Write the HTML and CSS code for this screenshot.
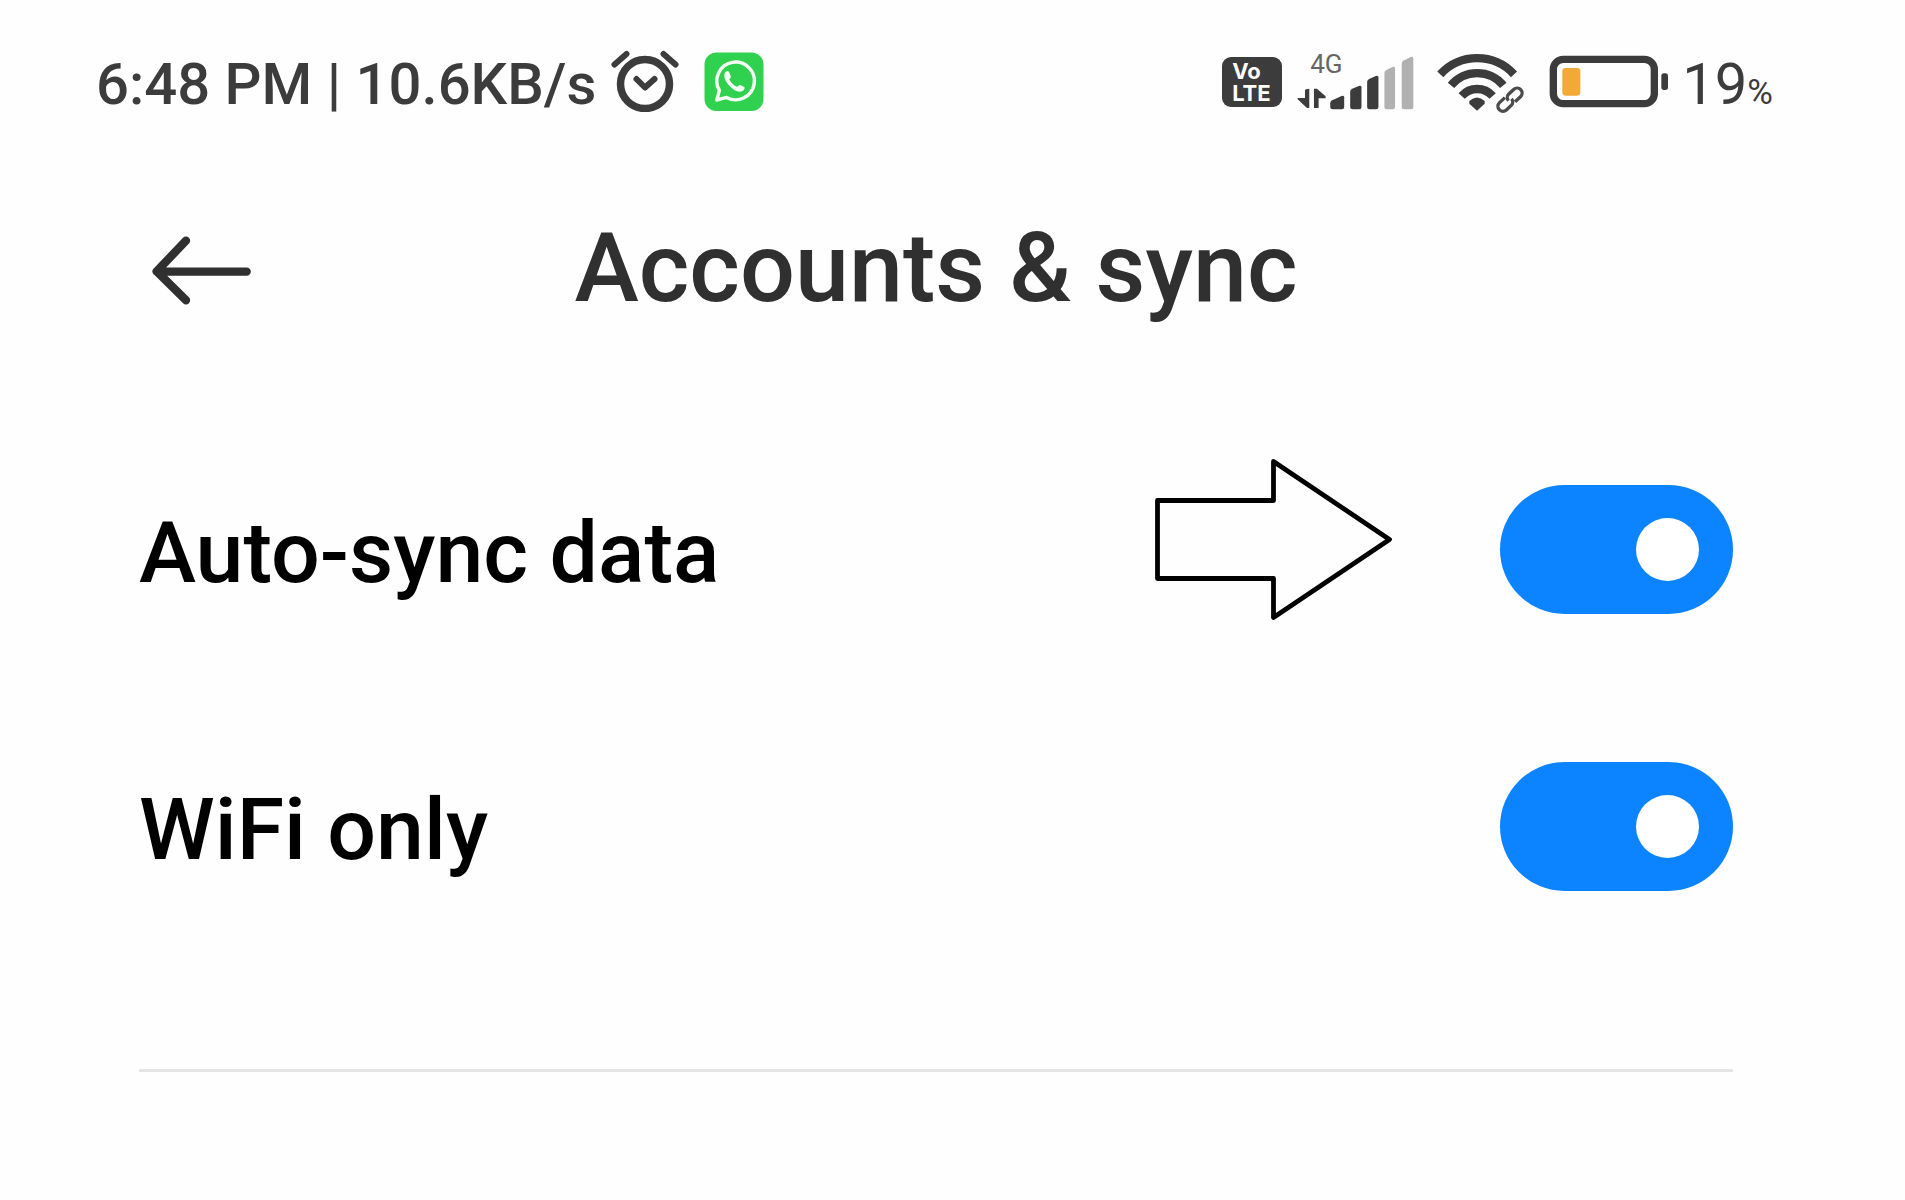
FILE: index.html
```html
<!DOCTYPE html>
<html lang="en">
  <head>
    <meta charset="UTF-8" />
    <title>Accounts &amp; sync</title>
    <meta name="viewport" content="width=device-width, initial-scale=1.0" />
    <link rel="stylesheet" href="styles.css">
  </head>
  <body>
    <!-- STATUS BAR -->
    <div class="status-bar">
      <div class="status-left">
        <span class="status-text">6:48 PM | 10.6KB/s</span>
        <svg class="alarm-icon" viewBox="0 0 68 62" fill="none" stroke="#3c3c3c" stroke-width="6" stroke-linecap="round" stroke-linejoin="round">
          <circle cx="34" cy="34" r="24.5" stroke-width="7.5"/>
          <path d="M3.5 14.5L15.5 4M52.5 4L64.5 14.5"/>
          <path d="M25.5 29L34 37.5L43.5 29"/>
        </svg>
        <svg class="whatsapp-icon" viewBox="0 0 60 60">
          <rect x="0.5" y="0.5" width="59" height="58.5" rx="12" fill="#31d150"/>
          <path d="M12.8 48L15.4 38.4A18.8 18.8 0 1 1 22.6 45.4Z" fill="none" stroke="#f4fff5" stroke-width="3.4" stroke-linejoin="round"/>
          <path d="M21 20.5C22.5 18.5 24.5 18.5 25.3 20.5L26.8 24.5C27 25.8 25.5 26.7 25.2 27.6C27 31 29.5 33.3 33 34.8C34 34.5 35 32.6 36.3 33L40.3 35C41.3 36 40 38.5 38 39.3C34 40.7 29.5 38 26 34.5C22.5 31 18.8 25 21 20.5Z" fill="#f4fff5"/>
        </svg>
      </div>

      <div class="status-right">
        <div class="volte"><span>Vo</span><span>LTE</span></div>
        <div class="signal">
          <span class="network">4G</span>
          <svg class="signal-icon" viewBox="260 40 352 168" fill="#3c3c3c">
            <path d="M284 150Q284 144 297 144V202H290L262 176V172H284ZM311 144H320L346 167V173H325V202H311Z"/>
            <path d="M360 188Q360 182 366 179L394 166Q402 163 402 170V199Q402 206 395 206H367Q360 206 360 199Z"/>
            <path d="M420 153Q420 147 426 144L446 136Q454 133 454 140V199Q454 206 447 206H427Q420 206 420 199Z"/>
            <path d="M471 124Q471 118 477 115L497 106Q505 103 505 110V199Q505 206 498 206H478Q471 206 471 199Z"/>
            <path d="M523 97Q523 91 529 88L547 79Q555 76 555 83V199Q555 206 548 206H530Q523 206 523 199Z" fill="#b1b1b1"/>
            <path d="M575 68Q575 62 581 59L602 49Q610 46 610 53V199Q610 206 603 206H582Q575 206 575 199Z" fill="#b1b1b1"/>
          </svg>
        </div>
        <svg class="wifi-icon" viewBox="50 36 264 186" fill="none" stroke="#3c3c3c" stroke-width="25">
          <path d="M60 103A150 150 0 0 1 281 103"/>
          <path d="M92 136A102 102 0 0 1 249 136"/>
          <path d="M124 168A62 62 0 0 1 217 168"/>
          <path d="M147 183Q170 162 193 183V191L170 212L147 191Z" fill="#3c3c3c" stroke="none"/>
          <!-- link badge -->
          <g transform="rotate(-43 269 179)">
            <rect x="220" y="155" width="98" height="48" rx="24" fill="#fefefe" stroke="none"/>
            <path d="M262 164H240A15 15 0 0 0 240 194H260A14 14 0 0 0 274 180M276 194H298A15 15 0 0 0 298 164H278A14 14 0 0 0 264 178" stroke="#4c4c4c" stroke-width="10"/>
          </g>
        </svg>
        <svg class="battery-icon" viewBox="388 43 360 159">
          <rect x="401" y="56" width="303" height="133" rx="30" fill="none" stroke="#3c3c3c" stroke-width="22"/>
          <rect x="428" y="82" width="54" height="83" rx="10" fill="#f3a936"/>
          <rect x="725" y="98" width="20" height="50" rx="8" fill="#3c3c3c"/>
        </svg>
        <span class="battery-level">19<small>%</small></span>
      </div>
    </div>

    <!-- PAGE HEADER -->
    <header class="header">
      <button class="back-btn" type="button" aria-label="Back">
        <svg viewBox="66 78 300 207" fill="none" stroke="#303030" stroke-width="25" stroke-linecap="round" stroke-linejoin="round">
          <path d="M168 92L80 184L168 271M80 185H350"/>
        </svg>
      </button>
      <h1>Accounts &amp; sync</h1>
    </header>

    <!-- SETTINGS -->
    <main class="settings">
      <div class="setting-row">
        <label for="autoSync">Auto-sync data</label>
        <svg class="pointer-arrow" viewBox="0 0 237 161" fill="none" stroke="#000" stroke-width="4.8" stroke-linejoin="round">
          <path d="M2.5 41.5H118.5V2.5L234.5 80.5L118.5 158.5V119.5H2.5Z"/>
        </svg>
        <input class="toggle" type="checkbox" id="autoSync" checked />
      </div>
      <div class="setting-row">
        <label for="wifiOnly">WiFi only</label>
        <input class="toggle" type="checkbox" id="wifiOnly" checked />
      </div>
      <hr />
    </main>
  </body>
</html>
```
FILE: styles.css
```css
/* RESET & VARIABLES */
* {
  margin: 0;
  padding: 0;
  box-sizing: border-box;
}
:root {
  --accent: #0d84ff;
  --icon-color: #3c3c3c;
  --title-color: #303030;
  --background-color: #fefefe;
}

body {
  font-family: Roboto, "Liberation Sans", sans-serif;
  background: var(--background-color);
  color: #000;
}
svg {
  display: block;
  flex-shrink: 0;
}

/* STATUS BAR */
.status-bar {
  display: flex;
  align-items: center;
  justify-content: space-between;
  height: 168px;
  padding: 0 132px 0 96px;
  color: var(--icon-color);
}
.status-left,
.status-right {
  display: flex;
  align-items: center;
  white-space: nowrap;
}
.status-text,
.battery-level {
  font-size: 58px;
  font-weight: 500;
  line-height: 64px;
}
.battery-level {
  font-weight: 400;
  margin-left: 13px;
}
.battery-level small {
  font-size: 35px;
  line-height: 35px;
}
.alarm-icon {
  width: 68px;
  height: 62px;
  margin-left: 15px;
  margin-bottom: 6px;
}
.whatsapp-icon {
  width: 60px;
  height: 60px;
  margin-left: 25px;
  margin-bottom: 4px;
}

.volte {
  display: flex;
  flex-direction: column;
  justify-content: center;
  width: 60px;
  height: 50px;
  padding-left: 10px;
  margin-bottom: 4px;
  border-radius: 9px;
  background: var(--icon-color);
  color: #fff;
  font-family: Inter, sans-serif;
  font-size: 22px;
  font-weight: 700;
  line-height: 22px;
}
.signal {
  position: relative;
  margin-left: 15px;
  margin-bottom: 4px;
}
.signal-icon {
  width: 117px;
  height: 56px;
}
/* Network type sits over the short bars */
.network {
  position: absolute;
  top: -4px;
  left: 13px;
  font-size: 26px;
  line-height: 28px;
  color: #666;
}
.wifi-icon {
  width: 88px;
  height: 62px;
  margin-left: 23px;
  margin-bottom: 2px;
}
.battery-icon {
  width: 120px;
  height: 53px;
  margin-left: 24px;
  margin-bottom: 6px;
}

/* HEADER */
.header {
  display: grid;
  grid-template-columns: 113px 1fr 113px;
  align-items: center;
  height: 200px;
  padding: 0 172px 0 139px;
}
.back-btn {
  justify-self: end;
  padding-top: 4px;
  border: none;
  background: none;
  cursor: pointer;
}
.back-btn svg {
  width: 100px;
  height: 69px;
}
.header h1 {
  font-size: 97px;
  font-weight: 500;
  line-height: 112px;
  text-align: center;
  color: var(--title-color);
}

/* SETTINGS */
.settings {
  padding: 43px 172px 0 139px;
}
.setting-row {
  display: flex;
  align-items: center;
  height: 277px;
}
.setting-row label {
  flex: 1;
  padding-top: 7px;
  font-size: 86px;
  font-weight: 500;
  line-height: 100px;
}
.pointer-arrow {
  width: 237px;
  height: 161px;
  margin-right: 108px;
  margin-bottom: 20px;
}
.toggle {
  appearance: none;
  display: flex;
  align-items: center;
  flex-shrink: 0;
  width: 233px;
  height: 129px;
  padding: 0 34px;
  border-radius: 65px;
  background: #d8d8d8;
  cursor: pointer;
}
.toggle::before {
  content: "";
  width: 63px;
  height: 63px;
  border-radius: 50%;
  background: #fff;
}
.toggle:checked {
  justify-content: flex-end;
  background: var(--accent);
}
.settings hr {
  height: 3px;
  margin-top: 104px;
  border: none;
  background: #e4e4e4;
}
```
